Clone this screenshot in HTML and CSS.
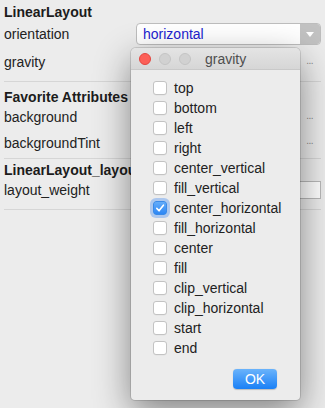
FILE: index.html
```html
<!DOCTYPE html>
<html>
<head>
<meta charset="utf-8">
<link rel="stylesheet" href="styles.css">
</head>
<body>
<div class="panel">
  <section class="sec sec1">
    <div class="hdr h1">LinearLayout</div>
    <div class="row r-orient">
      <span class="lbl">orientation</span>
      <div class="combo">
        <span class="combo-val">horizontal</span>
        <span class="combo-btn"><svg width="10" height="7" viewBox="0 0 10 7"><path d="M1 1 L9 1 L5 6 Z" fill="#fff"/></svg></span>
      </div>
    </div>
    <div class="row r-grav"><span class="lbl">gravity</span><span class="dots">...</span></div>
  </section>
  <section class="sec sec2">
    <div class="hdr h2">Favorite Attributes</div>
    <div class="row r-bg"><span class="lbl">background</span><span class="dots">...</span></div>
    <div class="row r-tint"><span class="lbl">backgroundTint</span><span class="dots">...</span></div>
  </section>
  <section class="sec sec3">
    <div class="hdr h3">LinearLayout_layout</div>
    <div class="row r-lw"><span class="lbl">layout_weight</span><span class="field"></span></div>
  </section>
</div>

<div class="dialog">
  <div class="titlebar">
    <span class="light red"></span>
    <span class="light gray"></span>
    <span class="light gray"></span>
    <span class="title">gravity</span>
  </div>
  <ul class="opts">
    <li class="opt"><span class="cb"></span>top</li>
    <li class="opt"><span class="cb"></span>bottom</li>
    <li class="opt"><span class="cb"></span>left</li>
    <li class="opt"><span class="cb"></span>right</li>
    <li class="opt"><span class="cb"></span>center_vertical</li>
    <li class="opt"><span class="cb"></span>fill_vertical</li>
    <li class="opt"><span class="cb checked"><svg width="12" height="12" viewBox="0 0 12 12"><path d="M2.8 6.4 L5 8.8 L9.4 3.2" fill="none" stroke="#fff" stroke-width="1.6" stroke-linecap="round" stroke-linejoin="round"/></svg></span>center_horizontal</li>
    <li class="opt"><span class="cb"></span>fill_horizontal</li>
    <li class="opt"><span class="cb"></span>center</li>
    <li class="opt"><span class="cb"></span>fill</li>
    <li class="opt"><span class="cb"></span>clip_vertical</li>
    <li class="opt"><span class="cb"></span>clip_horizontal</li>
    <li class="opt"><span class="cb"></span>start</li>
    <li class="opt"><span class="cb"></span>end</li>
  </ul>
  <div class="actions"><button class="ok">OK</button></div>
</div>
</body>
</html>
```

FILE: styles.css
```css
html, body {
  margin: 0;
  padding: 0;
  background: #ececec;
  width: 325px;
  height: 408px;
  overflow: hidden;
  font-family: "Liberation Sans", Arial, sans-serif;
  font-size: 14px;
  color: #222222;
}

.panel {
  padding: 0 4px;
  white-space: nowrap;
}

.sec {
  border-bottom: 1px solid #d6d6d6;
}

.sec1 { padding-bottom: 2px; }
.sec2 { padding-top: 4px; }
.sec3 { padding-bottom: 10px; }

.hdr {
  font-weight: bold;
  display: flex;
  align-items: center;
  color: #1c1c1c;
}

.h1 { height: 23px; }
.h2 { height: 21px; }
.h3 { height: 22px; }

.row {
  display: flex;
  align-items: center;
}

.r-orient { height: 22px; }
.r-grav { height: 34px; }
.r-bg { height: 20px; }
.r-tint { height: 31px; }
.r-lw { height: 18px; }

.lbl {
  flex: 0 0 auto;
}

.dots {
  margin-left: auto;
  margin-right: 8px;
  font-size: 10px;
  color: #8a8a8a;
  letter-spacing: -0.5px;
  position: relative;
  top: -2px;
}

.combo {
  margin-left: auto;
  width: 185px;
  height: 22px;
  box-sizing: border-box;
  border: 1px solid #bdbdbd;
  border-radius: 4px;
  background: #fff;
  display: flex;
  overflow: hidden;
}

.combo-val {
  flex: 1;
  padding-left: 6px;
  line-height: 20px;
  color: #2222d0;
}

.combo-btn {
  width: 20px;
  background: #c2c2c2;
  display: flex;
  align-items: center;
  justify-content: center;
}

.field {
  margin-left: auto;
  width: 184px;
  height: 18px;
  box-sizing: border-box;
  border: 1px solid #b9b9b9;
  background: #fff;
}

/* dialog */
.dialog {
  position: absolute;
  left: 131px;
  top: 48px;
  width: 169px;
  height: 352px;
  box-sizing: border-box;
  background: #ececec;
  border-radius: 5px 5px 4px 4px;
  box-shadow: 0 12px 36px rgba(0,0,0,0.45), 0 0 0 1px rgba(0,0,0,0.12);
  overflow: hidden;
}

.titlebar {
  height: 22px;
  box-sizing: border-box;
  background: linear-gradient(#e4e4e4, #d6d6d6);
  border-bottom: 1px solid #c9c9c9;
  display: flex;
  align-items: center;
  padding-left: 8px;
}

.light {
  width: 12px;
  height: 12px;
  box-sizing: border-box;
  border-radius: 50%;
  margin-right: 8px;
}

.light.red {
  background: #fc5f57;
  border: 1px solid #e2463f;
}

.light.gray {
  background: #d1d1d1;
  border: 1px solid #c4c4c4;
}

.title {
  margin-left: 6px;
  color: #4e4e4e;
}

.opts {
  list-style: none;
  margin: 0;
  padding: 8px 0 0 22px;
}

.opt {
  height: 20px;
  display: flex;
  align-items: center;
  color: #222222;
}

.cb {
  width: 14px;
  height: 14px;
  box-sizing: border-box;
  border: 1px solid #c3c3c3;
  border-radius: 3px;
  background: #fff;
  margin-right: 7px;
  display: flex;
  align-items: center;
  justify-content: center;
  box-shadow: 0 0.5px 0 rgba(0,0,0,0.05);
}

.cb.checked {
  background: linear-gradient(#64acf9, #2d87f5);
  border-color: #3a8ae8;
  box-shadow: 0 0 0 3px rgba(120,170,240,0.55);
}

.actions {
  display: flex;
  justify-content: flex-end;
  padding: 11px 23px 0 0;
}

.ok {
  width: 44px;
  height: 20px;
  border: none;
  border-radius: 4px;
  background: linear-gradient(#6ab3fb, #1a80f6);
  color: #fff;
  font-family: "Liberation Sans", Arial, sans-serif;
  font-size: 14px;
  padding: 0;
  box-shadow: 0 0.5px 1px rgba(0,0,0,0.2);
}
```
